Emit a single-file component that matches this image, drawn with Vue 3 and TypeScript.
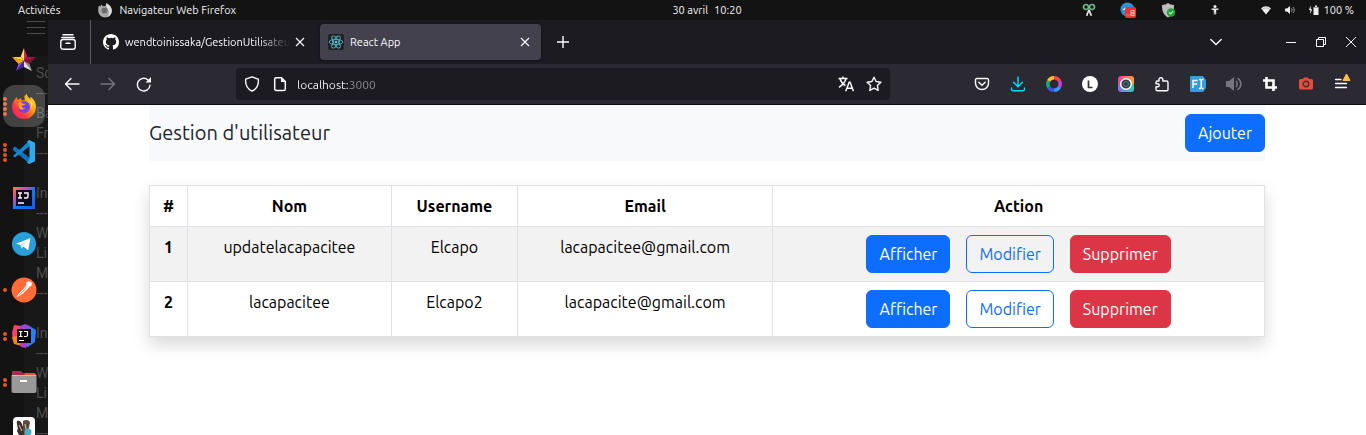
<script setup lang="ts">
import { ref } from 'vue'

interface User {
  id: number
  nom: string
  username: string
  email: string
}

interface DockItem {
  id: string
  label: string
  dots: number
  active?: boolean
}

const users: User[] = [
  { id: 1, nom: 'updatelacapacitee', username: 'Elcapo', email: 'lacapacitee@gmail.com' },
  { id: 2, nom: 'lacapacitee', username: 'Elcapo2', email: 'lacapacite@gmail.com' },
]

const columns: string[] = ['#', 'Nom', 'Username', 'Email', 'Action']

const dock: DockItem[] = [
  { id: 'star', label: 'StarUML', dots: 0 },
  { id: 'firefox', label: 'Firefox', dots: 4, active: true },
  { id: 'code', label: 'Visual Studio Code', dots: 4 },
  { id: 'idea', label: 'IntelliJ IDEA', dots: 0 },
  { id: 'telegram', label: 'Telegram', dots: 0 },
  { id: 'postman', label: 'Postman', dots: 1 },
  { id: 'idea-ce', label: 'IntelliJ IDEA Ultimate', dots: 2 },
  { id: 'files', label: 'Fichiers', dots: 2 },
  { id: 'dbeaver', label: 'DBeaver', dots: 0 },
]

const notes: string[] = [
  'Sc', '---', 'Ba', 'Fr', '---', '', 'In', '---', 'W', 'Li', 'M', '---', '', 'In', '---', 'W', 'Li', 'M', '---',
]

const extensions: { id: string; label: string }[] = [
  { id: 'pocket', label: 'Pocket' },
  { id: 'download', label: 'Téléchargements' },
  { id: 'ring', label: 'Couleurs' },
  { id: 'l', label: 'Extension L' },
  { id: 'lens', label: 'Capture' },
  { id: 'puzzle', label: 'Extensions' },
  { id: 'fi', label: 'Polices' },
  { id: 'sound', label: 'Volume' },
  { id: 'crop', label: 'Recadrer' },
  { id: 'camera', label: 'Appareil photo' },
  { id: 'menu', label: 'Menu' },
]

const address = ref('localhost:3000')
</script>

<template>
  <div class="desktop">
    <header class="topbar">
      <div class="top-left">
        <button class="top-item" type="button">Activités</button>
        <button class="top-item app-name" type="button">
          <svg width="16" height="16" viewBox="0 0 16 16" aria-hidden="true">
            <path d="M2 3.5 3.4 4.6 4.2 2.5 6 4.2 8.6 4 9.3 1.2C12 2.4 14.8 5 14.8 8.8a6.8 6.8 0 0 1-13.6 0C1.200 6.500 1.400 5 2 3.500z" fill="#a9a9a9" />
            <path d="M9.300 1.200C12 2.400 14.800 5 14.800 8.800c0 3-2 5.500-4.500 6.400 2.500-3 2-6.200.7-8C9.600 5 9 3.500 9.300 1.200z" fill="#dedede" />
            <circle cx="7.500" cy="8.500" r="3" fill="#6b6b6b" />
          </svg>
          <span>Navigateur Web Firefox</span>
        </button>
      </div>
      <button class="top-item clock" type="button"><span>30 avril</span><span>10:20</span></button>
      <div class="tray">
        <div class="tray-apps">
          <svg width="14" height="14" viewBox="0 0 14 14" aria-hidden="true">
            <g fill="none" stroke="#6fb98a" stroke-width="1.700"><circle cx="4" cy="4" r="2.500" /><circle cx="10" cy="4" r="2.500" /></g>
            <path d="M6.200 6.500 3.800 12.500 5.500 13 7 9l1.500 4 1.700-.5L7.800 6.500z" fill="#e5e5e5" />
          </svg>
          <svg width="16" height="16" viewBox="0 0 16 16" aria-hidden="true">
            <circle cx="7.500" cy="7.500" r="7" fill="#2a94cf" />
            <path d="M2.500 7.500 6 5.500v3z" fill="#fff" />
            <rect x="5" y="5" width="11" height="11" rx="2" fill="#e9352f" />
            <path d="M6.500 13h1M8.500 13h1" stroke="#ffb5b0" />
            <g fill="none" stroke="#ffb5b0"><rect x="11" y="8.500" width="3" height="2.500" /><rect x="11" y="11" width="3" height="2.500" /></g>
          </svg>
          <svg width="16" height="16" viewBox="0 0 16 16" aria-hidden="true">
            <path d="M2 3c2.500 0 4.500-.8 6-2 1.500 1.200 3.500 2 6 2 0 6-1.500 10-6 12.500C3.500 13 2 9 2 3z" fill="#bdbdbd" />
            <circle cx="11" cy="10.500" r="4.200" fill="#22a33c" />
            <path d="m9 10.500 1.500 1.500 2.500-2.700" fill="none" stroke="#b5efbf" stroke-width="1.200" />
          </svg>
        </div>
        <svg class="access" width="10" height="12" viewBox="0 0 10 12" aria-hidden="true">
          <circle cx="5" cy="2.500" r="1.500" fill="#eee" />
          <path d="M1.500 4.500h7v1.300L6.200 6v4.500H5.300V8.500h-.6v2h-.9V6l-2.300-.2z" fill="#eee" />
        </svg>
        <div class="tray-system">
          <svg width="12" height="12" viewBox="0 0 12 12" aria-hidden="true">
            <path d="M1 4.200a8 8 0 0 1 10 0L6 10.500z" fill="#eee" /><path d="M2 5.500a6 6 0 0 1 8 0" fill="none" stroke="#888" stroke-width=".6" />
          </svg>
          <svg width="12" height="12" viewBox="0 0 12 12" aria-hidden="true">
            <path d="M1 4.500h2L6 2v8L3 7.500H1z" fill="#eee" />
            <path d="M7.500 4.300c.8 1 .8 2.400 0 3.400M9 3c1.600 1.800 1.600 4.200 0 6" fill="none" stroke="#aaa" stroke-width=".9" />
          </svg>
          <svg width="12" height="12" viewBox="0 0 12 12" aria-hidden="true">
            <path d="M2.500 1.500 1 6h1.300v4L4.200 5.200H2.800z" fill="#eee" />
            <path d="M5.500 3h1.500V1.500h2V3h1.500v8h-5z" fill="#eee" /><path d="M6 3.500h4" stroke="#999" />
          </svg>
          <span>100 %</span>
        </div>
      </div>
    </header>

    <div class="workspace">
      <nav class="dock" aria-label="Applications">
        <div class="notes" aria-hidden="true">
          <div v-for="(line, i) in notes" :key="i" class="note">{{ line }}</div>
        </div>
        <svg class="burger" width="18" height="14" viewBox="0 0 18 14" aria-hidden="true"><path d="M0 1.500h18M0 7.500h18M0 13.500h18" stroke="#4d4d4d" /></svg>
        <button v-for="item in dock" :key="item.id" type="button" class="dock-item" :aria-label="item.label">
          <span class="dots"><i v-for="n in item.dots" :key="n"></i></span>
          <span class="dock-tile" :class="{ active: item.active }">
            <svg v-if="item.id === 'star'" width="26" height="26" viewBox="0 0 26 26">
              <path d="M13 1v13L9.800 9.500z" fill="#ffdf6b" /><path d="M13 1v13l3.200-4.500z" fill="#d2205a" />
              <path d="M1 10h8.800L13 14z" fill="#ffd34a" /><path d="m1 10 12 4-5.500 3z" fill="#f5a800" />
              <path d="M25 10h-8.800L13 14z" fill="#b3173f" /><path d="m25 10-12 4 5.500 3z" fill="#7d1433" />
              <path d="m21 24-2.500-7L13 14z" fill="#8c8c8c" /><path d="m21 24-8-4v-6z" fill="#e1e1e1" />
              <path d="m5 24 2.500-7L13 14z" fill="#8f5ae0" /><path d="m5 24 8-4v-6z" fill="#4b1fa0" />
            </svg>
            <svg v-else-if="item.id === 'firefox'" width="26" height="26" viewBox="0 0 26 26">
              <defs><linearGradient id="fx" x1="1" y1="0" x2="0" y2="1"><stop offset="0" stop-color="#fff44f" /><stop offset=".4" stop-color="#ff980e" /><stop offset=".7" stop-color="#ff3647" /><stop offset="1" stop-color="#e31587" /></linearGradient></defs>
              <path d="M3.500 7 5.500 4 7 7l3-2 .5 2.500L14 7l-.7-2.500C13.500 3 14.500 1.800 15.800 1c.3 2.800 2 3.500 3.700 5 0-.8 0-1.500-.4-2.200C22.500 5.500 25 9.500 25 14a12 12 0 0 1-24 0c0-3 1-5 2.500-7z" fill="url(#fx)" />
              <circle cx="13" cy="14" r="6" fill="#7542e5" />
              <path d="M7 10c2-1.500 4-.5 5 .8h2.500c0 1.700-3.500 1.600-3.500 2.700-.3 1.300 1.500 2 3 1.500-1 2.200-5 2.400-6.300-.2z" fill="#ff9a28" />
              <path d="M15 6c4.500 2 6 6 4.500 10 2-2 2.500-4 2-6.500-1.500-2-4-3-6.500-3.500z" fill="#ffe14a" />
            </svg>
            <svg v-else-if="item.id === 'code'" width="26" height="26" viewBox="0 0 26 26">
              <path d="M2 9.200 4 7.500 19 19v6L2 11z" fill="#0f76bd" />
              <path d="M2 17 19 1v6L4 18.500z" fill="#1389d6" />
              <path d="m18 1 6 2.800v18.400L18 25l-2-1.500 2.500-2.500V5L16 2.800z" fill="#31a9ee" />
            </svg>
            <svg v-else-if="item.id === 'idea'" width="24" height="24" viewBox="0 0 24 24">
              <defs><linearGradient id="ij" x1="0" y1="0" x2="1" y2="1"><stop offset="0" stop-color="#fc801d" /><stop offset=".3" stop-color="#d14bb0" /><stop offset=".55" stop-color="#087cfa" /><stop offset="1" stop-color="#2558e6" /></linearGradient></defs>
              <rect x="1" y="1" width="22" height="22" fill="url(#ij)" /><rect x="4" y="4" width="16" height="16" fill="#120b1b" />
              <path d="M6 7h4M8 7v5M6 12h4M12 7h4v3.500q0 1.500-1.500 1.500H12M6 17h6" stroke="#fff" stroke-width="1.400" fill="none" />
            </svg>
            <svg v-else-if="item.id === 'telegram'" width="26" height="26" viewBox="0 0 26 26">
              <circle cx="13" cy="13" r="12" fill="#289fd8" /><path d="M5 12.800 19.500 7l-2.300 12.200-5-3.700-2 2.200-.6-3.800z" fill="#fff" /><path d="m9.800 14 6.700-4.700-5 5.200-1.200 3z" fill="#b8d9ec" />
            </svg>
            <svg v-else-if="item.id === 'postman'" width="26" height="26" viewBox="0 0 26 26">
              <circle cx="13" cy="13" r="12.500" fill="#ff6c37" /><circle cx="18" cy="7" r="2.800" fill="#fff" /><path d="M16 8 18.500 10 12 16.500l-5 3-1.500.5 2-3z" fill="#fff" /><path d="m8 18 7-6.500" stroke="#ff6c37" stroke-width=".8" />
            </svg>
            <svg v-else-if="item.id === 'idea-ce'" width="26" height="26" viewBox="0 0 26 26">
              <path d="M3 2l7 1 3 10-4 5H2l-1-8z" fill="#f9406b" /><path d="m1 14 10-2v11l-8-2z" fill="#fc801d" />
              <path d="m17 2 8 5-1 12-7 5-7-3 2-12z" fill="#2f7df6" /><path d="m9 3 5-2 4 2 1 5H8z" fill="#9d47d1" /><path d="m8 19 9 1-2 5-5-1z" fill="#b73ad1" />
              <rect x="6" y="6" width="14" height="14" fill="#080808" /><path d="M8 8.500h3.500M9.700 8.500v5M8 13.500h3.500M13 8.500h3.500v3.500q0 1.500-1.500 1.500h-2M8 17.500h5" stroke="#fff" stroke-width="1.200" fill="none" />
            </svg>
            <svg v-else-if="item.id === 'files'" width="26" height="26" viewBox="0 0 26 26">
              <path d="M2 2h8l2 2h11q2 0 2 2v7H1V3q0-1 1-1z" fill="#a82c4b" /><path d="M14 4h9q2 0 2 2v3H12z" fill="#dc5a30" />
              <rect x=".5" y="6" width="25" height="18" rx="2" fill="#999" /><rect x=".5" y="6" width="25" height="1" rx=".5" fill="#bdbdbd" /><rect x="9" y="11" width="7" height="2" rx=".5" fill="#fff" />
            </svg>
            <svg v-else width="22" height="22" viewBox="0 0 22 22">
              <rect width="22" height="22" rx="4" fill="#fff" /><path d="M4 4c3-1 4 1 5 3l2 6 1 7H7L4 14c2-3-1-7 0-10z" fill="#3d302b" /><path d="M10 4c3-2 7-1 7 2l-2 9-3 4-2-8z" fill="#5d4b43" /><path d="m6 8 3 6M12 7l1 5" stroke="#d9c8bc" /><circle cx="15" cy="15" r="3.500" fill="#45b2c4" />
            </svg>
          </span>
        </button>
      </nav>

      <main class="browser">
        <div class="tabs">
          <button class="view-button" type="button" aria-label="Firefox View">
            <svg width="16" height="16" viewBox="0 0 16 16"><path d="M3 .8h10M1.800 3.500h12.400M3 5.500h10a2.200 2.200 0 0 1 2.200 2.200V13a2.200 2.200 0 0 1-2.200 2.200H3A2.200 2.200 0 0 1 .8 13V7.700A2.200 2.200 0 0 1 3 5.500zM6 9.300h4" fill="none" stroke="#fbfbfe" stroke-width="1.400" stroke-linecap="round" /></svg>
          </button>
          <div class="tab">
            <button class="tab-label" type="button">
              <svg width="16" height="16" viewBox="0 0 16 16"><path fill="#fff" d="M8 0C3.580 0 0 3.580 0 8c0 3.540 2.290 6.530 5.470 7.590.4.070.55-.17.55-.38 0-.19-.01-.82-.01-1.490-2.010.37-2.530-.49-2.690-.94-.09-.23-.48-.94-.82-1.130-.28-.15-.68-.52-.01-.53.63-.01 1.080.58 1.230.82.72 1.210 1.870.87 2.330.66.07-.52.28-.87.51-1.070-1.780-.2-3.640-.89-3.640-3.950 0-.87.31-1.590.82-2.150-.08-.2-.36-1.020.08-2.120 0 0 .67-.21 2.200.82a7.600 7.600 0 0 1 4 0c1.530-1.040 2.200-.82 2.200-.82.44 1.100.16 1.920.08 2.120.51.560.82 1.270.82 2.150 0 3.070-1.870 3.750-3.650 3.950.29.250.54.730.54 1.480 0 1.070-.01 1.930-.01 2.200 0 .21.150.46.550.38A8.010 8.010 0 0 0 16 8c0-4.420-3.580-8-8-8z" /></svg>
              <span class="tab-text faded">wendtoinissaka/GestionUtilisateurs</span>
            </button>
            <button class="tab-close" type="button" aria-label="Fermer l’onglet"><svg width="10" height="10" viewBox="0 0 10 10"><path d="m1 1 8 8M9 1 1 9" stroke="#fbfbfe" stroke-width="1.100" /></svg></button>
          </div>
          <div class="tab selected">
            <button class="tab-label" type="button">
              <svg width="16" height="16" viewBox="0 0 16 16"><rect width="16" height="16" rx="2" fill="#222" /><g fill="none" stroke="#54b5cb" stroke-width=".9"><ellipse cx="8" cy="8" rx="6.800" ry="2.600" /><ellipse cx="8" cy="8" rx="6.800" ry="2.600" transform="rotate(60 8 8)" /><ellipse cx="8" cy="8" rx="6.800" ry="2.600" transform="rotate(120 8 8)" /></g><circle cx="8" cy="8" r="1.200" fill="#61dafb" /></svg>
              <span class="tab-text">React App</span>
            </button>
            <button class="tab-close" type="button" aria-label="Fermer l’onglet"><svg width="10" height="10" viewBox="0 0 10 10"><path d="m1 1 8 8M9 1 1 9" stroke="#fbfbfe" stroke-width="1.100" /></svg></button>
          </div>
          <button class="tool new-tab" type="button" aria-label="Nouvel onglet"><svg width="12" height="12" viewBox="0 0 12 12"><path d="M6 0v12M0 6h12" stroke="#fbfbfe" stroke-width="1.400" /></svg></button>
          <button class="tool all-tabs" type="button" aria-label="Lister les onglets"><svg width="12" height="8" viewBox="0 0 12 8"><path d="m.8 1.500 5.200 5 5.200-5" fill="none" stroke="#fbfbfe" stroke-width="1.400" stroke-linecap="round" /></svg></button>
          <button class="win" type="button" aria-label="Réduire"><svg width="10" height="10" viewBox="0 0 10 10"><path d="M0 5.500h10" stroke="#fbfbfe" /></svg></button>
          <button class="win" type="button" aria-label="Restaurer"><svg width="10" height="10" viewBox="0 0 10 10"><path d="M.5 2.500h7v7h-7zM2.500 2.500v-2h7v7h-2" fill="none" stroke="#fbfbfe" /></svg></button>
          <button class="win" type="button" aria-label="Fermer"><svg width="10" height="10" viewBox="0 0 10 10"><path d="m0 0 10 10M10 0 0 10" stroke="#fbfbfe" /></svg></button>
        </div>

        <div class="toolbar">
          <button class="tool" type="button" aria-label="Précédent"><svg width="16" height="16" viewBox="0 0 16 16"><path d="M15 8H1.500M7 2.500 1.500 8 7 13.500" fill="none" stroke="#fbfbfe" stroke-width="1.400" stroke-linecap="round" stroke-linejoin="round" /></svg></button>
          <button class="tool" type="button" aria-label="Suivant"><svg width="16" height="16" viewBox="0 0 16 16"><path d="M1 8h13.500M9 2.500 14.500 8 9 13.500" fill="none" stroke="#77767d" stroke-width="1.400" stroke-linecap="round" stroke-linejoin="round" /></svg></button>
          <button class="tool" type="button" aria-label="Actualiser"><svg width="16" height="16" viewBox="0 0 16 16"><path d="M14 9.200A6.300 6.300 0 1 1 12 4" fill="none" stroke="#fbfbfe" stroke-width="1.400" stroke-linecap="round" /><path d="M15 1v5.500H9.500z" fill="#fbfbfe" /></svg></button>
          <form class="urlbar" @submit.prevent>
            <svg width="16" height="16" viewBox="0 0 16 16" aria-hidden="true"><path d="M8 .9 14.300 3.200C14.800 8 13 12.800 8 15.200 3 12.800 1.200 8 1.700 3.200z" fill="none" stroke="#fbfbfe" stroke-width="1.400" stroke-linejoin="round" /></svg>
            <svg width="16" height="16" viewBox="0 0 16 16" aria-hidden="true"><path d="M4.200 1.700H9.500L13.300 5.500V13a1.500 1.500 0 0 1-1.500 1.500H4.200A1.500 1.500 0 0 1 2.700 13V3.200a1.500 1.500 0 0 1 1.500-1.500z" fill="none" stroke="#fbfbfe" stroke-width="1.500" /><path d="M9 1.500V6h4.500z" fill="#fbfbfe" /></svg>
            <input v-model="address" class="address" type="text" aria-label="Adresse" spellcheck="false" />
            <svg width="16" height="16" viewBox="0 0 16 16" aria-hidden="true"><path d="M.5 2.500h9M5 .5v2M2 2.700c1 3.300 3 5.500 5.500 7M8 2.700C7 6.500 4.500 9 1 11.300M7.700 15.300l3.500-9h.9l3.400 9M9 12.300h5.300" fill="none" stroke="#fbfbfe" stroke-width="1.500" /></svg>
            <svg width="16" height="16" viewBox="0 0 16 16" aria-hidden="true"><path d="m8 1.200 2.100 4.300 4.800.7-3.500 3.400.8 4.800L8 12.100l-4.200 2.300.8-4.800L1.100 6.200l4.800-.7z" fill="none" stroke="#fbfbfe" stroke-width="1.400" stroke-linejoin="round" /></svg>
          </form>
          <button v-for="ext in extensions" :key="ext.id" class="tool" type="button" :aria-label="ext.label">
            <svg v-if="ext.id === 'pocket'" width="16" height="16" viewBox="0 0 16 16" fill="none" stroke="#fbfbfe" stroke-width="1.400" stroke-linecap="round" stroke-linejoin="round"><path d="M2.800 2.500h10.400a1.300 1.300 0 0 1 1.300 1.300v3.400a6.500 6.300 0 0 1-13 0V3.800a1.300 1.300 0 0 1 1.300-1.300z" /><path d="M4.800 6.200 8 9.200l3.200-3" /></svg>
            <svg v-else-if="ext.id === 'download'" width="16" height="16" viewBox="0 0 16 16" fill="none" stroke="#00ddff" stroke-width="1.400" stroke-linecap="round" stroke-linejoin="round"><path d="M8 1v9.500M3.500 6.300 8 10.800l4.500-4.500M1.500 12v1.200a1.500 1.500 0 0 0 1.500 1.500h10a1.500 1.500 0 0 0 1.500-1.500V12" /></svg>
            <svg v-else-if="ext.id === 'ring'" width="16" height="16" viewBox="0 0 16 16" fill="none" stroke-width="3.500"><g><circle cx="8" cy="8" r="6.200" stroke="#ff453a" pathLength="6" stroke-dasharray="1 5" stroke-dashoffset="1.500" /><circle cx="8" cy="8" r="6.200" stroke="#c83ff0" pathLength="6" stroke-dasharray="1 5" stroke-dashoffset=".5" /><circle cx="8" cy="8" r="6.200" stroke="#369cff" pathLength="6" stroke-dasharray="1 5" stroke-dashoffset="-.5" /><circle cx="8" cy="8" r="6.200" stroke="#4054ef" pathLength="6" stroke-dasharray="1 5" stroke-dashoffset="-1.500" /><circle cx="8" cy="8" r="6.200" stroke="#11b277" pathLength="6" stroke-dasharray="1 5" stroke-dashoffset="-2.500" /><circle cx="8" cy="8" r="6.200" stroke="#ffbd2e" pathLength="6" stroke-dasharray="1 5" stroke-dashoffset="-3.500" /></g></svg>
            <svg v-else-if="ext.id === 'l'" width="16" height="16" viewBox="0 0 16 16"><circle cx="8" cy="8" r="8" fill="#fff" /><path d="M6.500 4.500v7h4" fill="none" stroke="#333" stroke-width="1.700" /></svg>
            <svg v-else-if="ext.id === 'lens'" class="lens" width="16" height="16" viewBox="0 0 16 16"><defs><linearGradient id="lens-top"><stop offset="0" stop-color="#f0389b" /><stop offset="1" stop-color="#ffa52f" /></linearGradient><linearGradient id="lens-bottom"><stop offset="0" stop-color="#8d6bf2" /><stop offset="1" stop-color="#2fd0a8" /></linearGradient></defs><rect width="16" height="8" fill="url(#lens-top)" /><rect y="8" width="16" height="8" fill="url(#lens-bottom)" /><circle cx="8" cy="8" r="5.300" fill="#32424d" stroke="#fff" stroke-width="1.500" /><circle cx="8" cy="8" r="2.500" fill="none" stroke="#5b707d" /></svg>
            <svg v-else-if="ext.id === 'puzzle'" width="16" height="16" viewBox="0 0 16 16"><path d="M5 5V3.600a1.900 1.900 0 0 1 3.800 0V5h3.700q1.500 0 1.500 1.500v7q0 1.300-1.300 1.300H3.500q-1.500 0-1.500-1.500v-2.500h1.700a1.500 1.500 0 0 0 0-3H2V6.500Q2 5 3.500 5z" fill="none" stroke="#fbfbfe" stroke-width="1.400" stroke-linejoin="round" /></svg>
            <svg v-else-if="ext.id === 'fi'" width="16" height="16" viewBox="0 0 16 16"><path d="M1 0h12l3 4v8l-3 4H1q-1 0-1-1V1q0-1 1-1z" fill="#399bdd" /><path d="M3 12V4.500h4.500M3 8h4M9 3.500h1.500q.7 0 .7.700v7.600q0 .7-.7.700H9M13.500 3.500H12M13.500 12.500H12" fill="none" stroke="#fff" stroke-width="1.400" /></svg>
            <svg v-else-if="ext.id === 'sound'" width="16" height="16" viewBox="0 0 16 16"><path d="M0 5h3l5-4v14l-5-4H0z" fill="#77767d" /><path d="M10 5c1.500 1.800 1.500 4.200 0 6M11.500 2.200c4.500 3 4.500 8.600 0 11.600" fill="none" stroke="#77767d" stroke-width="1.500" /></svg>
            <svg v-else-if="ext.id === 'crop'" width="16" height="16" viewBox="0 0 16 16"><path d="M4.500 1v10.500H15M1 4.500h10.500V15" fill="none" stroke="#fff" stroke-width="2.600" /></svg>
            <svg v-else-if="ext.id === 'camera'" width="16" height="16" viewBox="0 0 16 16"><path d="M2.500 3H5l1-1.500h4L11 3h2.500Q15 3 15 4.500V12q0 1.500-1.500 1.500h-11Q1 13.500 1 12V4.500Q1 3 2.500 3z" fill="#e74c3c" /><circle cx="8" cy="8" r="2.700" fill="none" stroke="#42302f" stroke-width="1.400" /></svg>
            <svg v-else class="menu-icon" width="18" height="20" viewBox="0 0 18 20"><path d="M2.500 7.500H8M2.500 11.500h11M2.500 15.500h11" stroke="#fbfbfe" stroke-width="1.300" stroke-linecap="round" /><path d="M10 8.500 13.500 2 17 8.500z" fill="#ffbd4f" stroke="#ffbd4f" stroke-linejoin="round" /></svg>
          </button>
        </div>

        <div class="page">
          <div class="container">
            <header class="navbar">
              <a class="brand" href="#">Gestion d'utilisateur</a>
              <button class="btn primary" type="button">Ajouter</button>
            </header>
            <table class="users">
              <colgroup><col class="c-id" /><col class="c-nom" /><col class="c-user" /><col class="c-mail" /><col /></colgroup>
              <thead>
                <tr><th v-for="column in columns" :key="column" scope="col">{{ column }}</th></tr>
              </thead>
              <tbody>
                <tr v-for="user in users" :key="user.id">
                  <th scope="row">{{ user.id }}</th>
                  <td>{{ user.nom }}</td>
                  <td>{{ user.username }}</td>
                  <td>{{ user.email }}</td>
                  <td>
                    <div class="actions">
                      <button class="btn primary" type="button">Afficher</button>
                      <button class="btn outline" type="button">Modifier</button>
                      <button class="btn danger" type="button">Supprimer</button>
                    </div>
                  </td>
                </tr>
              </tbody>
            </table>
          </div>
        </div>
      </main>
    </div>
  </div>
</template>

<style>
html,
body {
  overflow: hidden;
}
</style>

<style scoped>
.desktop,
.desktop * {
  box-sizing: border-box;
}
.desktop {
  display: flex;
  flex-direction: column;
  height: 100vh;
  font-family: Ubuntu, "Noto Sans", sans-serif;
  color: #212529;
  background: #131313;
}
button {
  font: inherit;
  color: inherit;
  background: none;
  border: 0;
  padding: 0;
  cursor: pointer;
}
svg {
  display: block;
  flex: none;
}

/* System bar */
.topbar {
  display: grid;
  grid-template-columns: 1fr auto 1fr;
  align-items: center;
  height: 20px;
  flex: none;
  padding: 0 12px 0 18px;
  background: #131313;
  color: #f2f2f2;
  font-size: 11px;
  line-height: 20px;
  white-space: nowrap;
}
.top-left,
.top-item,
.tray,
.tray-apps,
.tray-system {
  display: flex;
  align-items: center;
}
.top-left {
  gap: 37px;
}
.app-name {
  gap: 6px;
}
.clock {
  gap: 6px;
  margin-left: 42px;
}
.tray {
  justify-content: flex-end;
}
.tray-apps {
  gap: 24px;
}
.access {
  margin: 0 40px 0 34px;
}
.tray-system {
  gap: 12px;
}
.tray-system span {
  margin-left: -8px;
}

.workspace {
  display: flex;
  flex: 1;
  min-height: 0;
}

/* Application dock */
.dock {
  position: relative;
  width: 48px;
  flex: none;
  padding-top: 17px;
  overflow: hidden;
}
.notes {
  position: absolute;
  top: 36px;
  left: 24px;
  right: 0;
  bottom: 0;
  padding: 7px 0 0 12px;
  overflow: hidden;
  background: #181818;
  color: #4d4d4d;
  font: 14px/20px Roboto, sans-serif;
  white-space: nowrap;
}
.note {
  height: 20px;
}
.burger {
  position: absolute;
  top: 0;
  left: 27px;
}
.dock-item {
  position: relative;
  display: flex;
  align-items: center;
  width: 100%;
  height: 46px;
}
.dots {
  display: flex;
  flex-direction: column;
  gap: 1px;
  width: 3px;
  padding-left: 3px;
}
.dots i {
  width: 4px;
  height: 4px;
  border-radius: 50%;
  background: #e95420;
}
.dock-tile {
  display: flex;
  align-items: center;
  justify-content: center;
  width: 42px;
  height: 42px;
  border-radius: 12px;
}
.dock-tile.active {
  background: rgba(255, 255, 255, 0.2);
}

/* Browser chrome */
.browser {
  flex: 1;
  min-width: 0;
  background: #fff;
  overflow: hidden;
}
.tabs {
  display: flex;
  align-items: center;
  height: 44px;
  background: #1c1b22;
  color: #fbfbfe;
  font-size: 11px;
}
.view-button {
  display: flex;
  align-items: center;
  justify-content: flex-start;
  width: 43px;
  height: 44px;
  padding-left: 12px;
  margin-right: 4px;
  border-right: 1px solid #5b5b62;
}
.tab {
  display: flex;
  align-items: center;
  width: 221px;
  height: 36px;
  padding: 0 6px 0 8px;
  margin-right: 4px;
  border-radius: 4px;
}
.tab.selected {
  background: #42414d;
  box-shadow: 0 0 3px rgba(0, 0, 0, 0.5);
}
.tab-label {
  display: flex;
  align-items: center;
  gap: 6px;
  flex: 1;
  min-width: 0;
}
.tab-text {
  overflow: hidden;
  white-space: nowrap;
}
.faded {
  mask-image: linear-gradient(to left, transparent, #000 32px);
}
.tab-close {
  display: grid;
  place-items: center;
  width: 20px;
  height: 20px;
  flex: none;
}
.tool {
  display: grid;
  place-items: center;
  width: 36px;
  height: 32px;
  flex: none;
}
.all-tabs {
  margin: 0 42px 0 auto;
}
.win {
  display: grid;
  place-items: center;
  width: 30px;
  height: 32px;
}
.toolbar {
  display: flex;
  align-items: center;
  height: 41px;
  padding: 0 6px;
  background: #2b2a33;
  border-bottom: 1px solid #0c0c0d;
}
.urlbar {
  display: flex;
  align-items: center;
  gap: 12px;
  flex: 1;
  min-width: 0;
  height: 32px;
  margin: 0 74px;
  padding: 0 8px;
  border-radius: 4px;
  background: #1c1b22;
}
.address {
  flex: 1;
  min-width: 0;
  height: 24px;
  margin-left: -3px;
  padding: 0;
  border: 0;
  outline: 0;
  font: inherit;
  font-size: 12px;
  color: transparent;
  caret-color: #fbfbfe;
  background: linear-gradient(to right, #fbfbfe 51px, #8f8f96 51px);
  background-clip: text;
}
.lens {
  border-radius: 3px;
}
.menu-icon {
  margin-top: -4px;
}

/* Web page */
.container {
  max-width: 1140px;
  margin: 0 auto;
  padding: 0 12px;
}
.navbar {
  display: flex;
  align-items: center;
  justify-content: space-between;
  height: 56px;
  margin-bottom: 24px;
  background: #f8f9fa;
}
.brand {
  font-size: 20px;
  line-height: 30px;
  color: #212529;
  text-decoration: none;
}
.btn {
  padding: 6px 12px;
  border: 1px solid transparent;
  border-radius: 6px;
  font-size: 16px;
  line-height: 24px;
  text-align: center;
}
.primary {
  color: #fff;
  background: #0d6efd;
  border-color: #0d6efd;
}
.outline {
  color: #0d6efd;
  border-color: #0d6efd;
}
.danger {
  color: #fff;
  background: #dc3545;
  border-color: #dc3545;
}
.users {
  width: 100%;
  table-layout: fixed;
  border-collapse: collapse;
  font-size: 16px;
  line-height: 24px;
  color: #000;
  text-align: center;
  box-shadow: 0 8px 16px rgba(0, 0, 0, 0.15);
}
.users th,
.users td {
  padding: 8px;
  border: 1px solid #dee2e6;
  vertical-align: top;
}
.users tbody tr:nth-child(odd) {
  background: #f2f2f2;
}
.c-id {
  width: 3.4%;
}
.c-nom {
  width: 18.3%;
}
.c-user {
  width: 11.3%;
}
.c-mail {
  width: 22.9%;
}
.actions {
  display: flex;
  justify-content: center;
  gap: 16px;
}
</style>
